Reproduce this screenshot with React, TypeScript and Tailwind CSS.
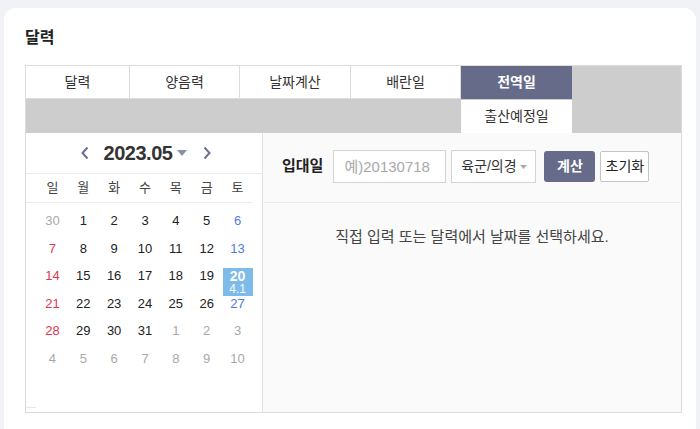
import React from 'react';

const tabs = [
  { label: '달력', w: 'w-[104px]' },
  { label: '양음력', w: 'w-[110px]' },
  { label: '날짜계산', w: 'w-[111px]' },
  { label: '배란일', w: 'w-[110px]' },
  { label: '전역일', w: 'w-[111px]' },
];
const weekDays = ['일', '월', '화', '수', '목', '금', '토'];

type Day = { d: number; muted?: boolean; lunar?: string };

const weeks: Day[][] = [
  [{ d: 30, muted: true }, { d: 1 }, { d: 2 }, { d: 3 }, { d: 4 }, { d: 5 }, { d: 6 }],
  [{ d: 7 }, { d: 8 }, { d: 9 }, { d: 10 }, { d: 11 }, { d: 12 }, { d: 13 }],
  [{ d: 14 }, { d: 15 }, { d: 16 }, { d: 17 }, { d: 18 }, { d: 19 }, { d: 20, lunar: '4.1' }],
  [{ d: 21 }, { d: 22 }, { d: 23 }, { d: 24 }, { d: 25 }, { d: 26 }, { d: 27 }],
  [{ d: 28 }, { d: 29 }, { d: 30 }, { d: 31 }, { d: 1, muted: true }, { d: 2, muted: true }, { d: 3, muted: true }],
  [4, 5, 6, 7, 8, 9, 10].map((d) => ({ d, muted: true })),
];

function dayColor(day: Day, col: number) {
  if (day.muted) return 'text-[#a8a8a8]';
  if (col === 0) return 'text-[#e2364f]';
  if (col === 6) return 'text-[#4f7be0]';
  return 'text-[#222]';
}

function Calendar() {
  return (
    <div className="flex w-[236px] shrink-0 flex-col bg-white">
      <div className="flex h-[41px] items-center justify-center border-b border-[#ececec] pl-[4px]">
        <svg width="10" height="14" viewBox="0 0 10 14" className="mr-[14px]">
          <path d="M7.5 1.5 2.5 7l5 5.5" fill="none" stroke="#6b7191" strokeWidth="2" />
        </svg>
        <span className="text-[20px] font-bold tracking-[-0.5px] text-[#333]">2023.05</span>
        <svg width="10" height="6" viewBox="0 0 10 6" className="ml-[5px]">
          <path d="M0 0h10L5 6z" fill="#8a8fa8" />
        </svg>
        <svg width="10" height="14" viewBox="0 0 10 14" className="ml-[15px]">
          <path d="M2.5 1.5 7.5 7l-5 5.5" fill="none" stroke="#6b7191" strokeWidth="2" />
        </svg>
      </div>
      <div className="grid h-[29px] w-[227px] grid-cols-7 items-center border-b border-[#ececec] pl-[11px] text-[13px] text-[#444]">
        {weekDays.map((w) => (
          <span key={w} className="text-center">
            {w}
          </span>
        ))}
      </div>
      <div className="flex-1 pt-[4px] pl-[11px]">
        {weeks.map((week, i) => (
          <div
            key={i}
            className="grid h-[27.5px] w-[216px] grid-cols-7 grid-rows-[27.5px] items-center text-[13px]"
          >
            {week.map((day, col) =>
              day.lunar ? (
                <div
                  key={col}
                  className="mx-auto flex h-[28px] w-[30px] translate-y-[6px] flex-col items-center bg-[#7dbbe9] pt-[1px] text-white"
                >
                  <span className="text-[14px] leading-[14px] font-bold">{day.d}</span>
                  <span className="text-[12px] leading-[13px]">{day.lunar}</span>
                </div>
              ) : (
                <span key={col} className={`text-center ${dayColor(day, col)}`}>
                  {day.d}
                </span>
              )
            )}
          </div>
        ))}
      </div>
      <div className="mb-[4px] h-px w-[10px] bg-[#e6e6e6]" />
    </div>
  );
}

function DischargeForm() {
  return (
    <div className="flex-1 border-l border-[#e3e3e3] bg-[#fafafa]">
      <div className="flex h-[70px] items-center border-b border-[#ececec] pl-[19px] pb-[2px]">
        <span className="mr-[10px] text-[15px] font-bold text-[#222]">입대일</span>
        <input
          placeholder="예)20130718"
          className="h-[33px] w-[113px] border border-[#d4d4d4] bg-white px-[10px] text-[15px] text-[#333] placeholder:text-[#a9a9a9] outline-none"
        />
        <div className="ml-[5px] flex h-[33px] w-[85px] items-center justify-center gap-[3px] border border-[#d4d4d4] bg-white text-[14px] text-[#333]">
          육군/의경
          <svg width="7" height="4" viewBox="0 0 7 4">
            <path d="M0 0h7L3.5 4z" fill="#aaa" />
          </svg>
        </div>
        <button className="ml-[8px] h-[31px] w-[51px] rounded-[3px] bg-[#666b8a] text-[14px] font-bold text-white">
          계산
        </button>
        <button className="ml-[5px] h-[31px] w-[49px] rounded-[2px] border border-[#c4c4c4] bg-white text-[14px] text-[#222]">
          초기화
        </button>
      </div>
      <p className="pt-[23px] text-center text-[15px] text-[#444]">
        직접 입력 또는 달력에서 날짜를 선택하세요.
      </p>
    </div>
  );
}

export default function App() {
  return (
    <div
      className="h-[429px] overflow-hidden bg-[#f1f2f6] pt-[8px] pl-[4px]"
      style={{ fontFamily: '"Liberation Sans", "Noto Sans CJK KR", sans-serif' }}
    >
      <div className="h-[440px] w-[692px] rounded-t-[12px] bg-white pt-[20px] pl-[21px]">
        <h1 className="text-[16px] leading-[20px] font-bold text-[#222]">달력</h1>
        <div className="mt-[17px] w-[657px] border border-[#dcdcdc]">
          <div className="flex bg-[#cdcdcd]">
            {tabs.map((t, i) => (
              <div
                key={t.label}
                className={
                  i === 4
                    ? `flex h-[33px] ${t.w} items-center justify-center bg-[#666b8a] text-[14px] font-bold text-white`
                    : `flex h-[33px] ${t.w} items-center justify-center border-r border-b border-[#dcdcdc] bg-white text-[14px] text-[#333]`
                }
              >
                {t.label}
              </div>
            ))}
          </div>
          <div className="flex h-[34px] bg-[#cdcdcd] pl-[435px]">
            <div className="flex w-[111px] items-center justify-center border-t border-[#cdcdcd] bg-white text-[14px] text-[#333]">
              출산예정일
            </div>
          </div>
          <div className="flex h-[279px]">
            <Calendar />
            <DischargeForm />
          </div>
        </div>
      </div>
    </div>
  );
}
